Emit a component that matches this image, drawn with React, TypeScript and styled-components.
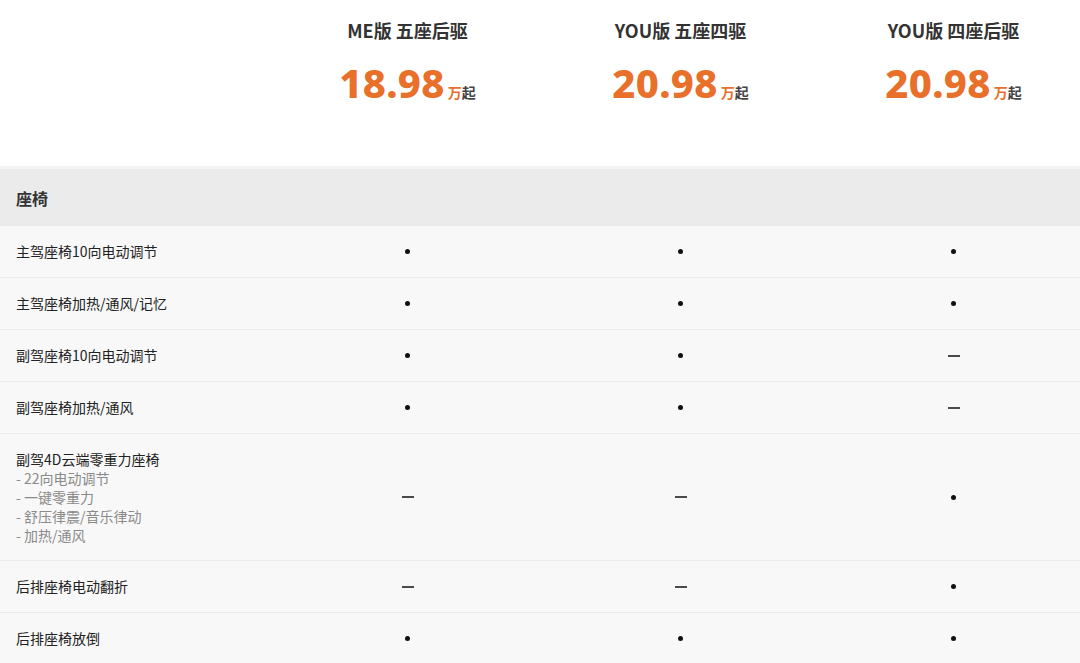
import styled, { createGlobalStyle } from 'styled-components';

const GlobalStyle = createGlobalStyle`
  html, body {
    margin: 0;
    padding: 0;
    background: #ffffff;
    font-family: "Noto Sans CJK SC", "Noto Sans", sans-serif;
    overflow: hidden;
  }
`;

const COLS = '271px 273px 273px 273px';

const Page = styled.div`
  width: 1080px;
  height: 663px;
  overflow: hidden;
  background: #f8f8f8;
`;

const Header = styled.div`
  display: grid;
  grid-template-columns: ${COLS};
  height: 166px;
  background: #ffffff;
`;

const ModelCell = styled.div`
  display: flex;
  flex-direction: column;
  align-items: center;
  padding-top: 17px;
`;

const ModelName = styled.div`
  font-size: 18px;
  font-weight: 700;
  color: #333333;
  line-height: 26px;
  white-space: nowrap;
`;

const Price = styled.div`
  margin-top: 16px;
  display: flex;
  align-items: baseline;
  white-space: nowrap;
`;

const PriceNum = styled.span`
  font-family: "Noto Sans", sans-serif;
  font-size: 40px;
  font-weight: 800;
  color: #e8702a;
  letter-spacing: 0.3px;
  line-height: 48px;
`;

const Unit = styled.span<{ $accent?: boolean }>`
  font-size: 14px;
  font-weight: 700;
  color: ${({ $accent }) => ($accent ? '#e8702a' : '#444444')};
  margin-left: ${({ $accent }) => ($accent ? '3px' : '0')};
`;

const Section = styled.div`
  height: 60px;
  display: flex;
  align-items: center;
  padding-left: 16px;
  background: #ebebeb;
  border-top: 3px solid #f3f3f3;
  box-sizing: border-box;
  font-size: 16px;
  font-weight: 700;
  color: #333333;
`;

const Row = styled.div<{ $tall?: boolean }>`
  display: grid;
  grid-template-columns: ${COLS};
  min-height: ${({ $tall }) => ($tall ? '127px' : '52px')};
  border-bottom: 1px solid #ececec;
  box-sizing: border-box;
  background: #f8f8f8;
`;

const Label = styled.div`
  display: flex;
  flex-direction: column;
  justify-content: center;
  padding-left: 16px;
  font-size: 14px;
  color: #222222;
  line-height: 19px;
`;

const Sub = styled.div`
  color: #8a8a8a;
  font-size: 14px;
  line-height: 19px;
`;

const Cell = styled.div`
  display: flex;
  align-items: center;
  justify-content: center;
`;

const Dot = styled.span`
  width: 5px;
  height: 5px;
  border-radius: 50%;
  background: #111111;
`;

const Dash = styled.span`
  width: 12px;
  height: 2px;
  background: #4a4a4a;
`;

const models = [
  { name: 'ME版 五座后驱', price: '18.98' },
  { name: 'YOU版 五座四驱', price: '20.98' },
  { name: 'YOU版 四座后驱', price: '20.98' },
];

type Item = { label: string; subs?: string[]; values: boolean[] };

const items: Item[] = [
  { label: '主驾座椅10向电动调节', values: [true, true, true] },
  { label: '主驾座椅加热/通风/记忆', values: [true, true, true] },
  { label: '副驾座椅10向电动调节', values: [true, true, false] },
  { label: '副驾座椅加热/通风', values: [true, true, false] },
  {
    label: '副驾4D云端零重力座椅',
    subs: ['- 22向电动调节', '- 一键零重力', '- 舒压律震/音乐律动', '- 加热/通风'],
    values: [false, false, true],
  },
  { label: '后排座椅电动翻折', values: [false, false, true] },
  { label: '后排座椅放倒', values: [true, true, true] },
];

export default function App() {
  return (
    <Page>
      <GlobalStyle />
      <Header>
        <div />
        {models.map((m) => (
          <ModelCell key={m.name}>
            <ModelName>{m.name}</ModelName>
            <Price>
              <PriceNum>{m.price}</PriceNum>
              <Unit $accent>万</Unit>
              <Unit>起</Unit>
            </Price>
          </ModelCell>
        ))}
      </Header>
      <Section>座椅</Section>
      {items.map((it) => (
        <Row key={it.label} $tall={!!it.subs}>
          <Label>
            <div>{it.label}</div>
            {it.subs?.map((s) => <Sub key={s}>{s}</Sub>)}
          </Label>
          {it.values.map((v, i) => (
            <Cell key={i}>{v ? <Dot /> : <Dash />}</Cell>
          ))}
        </Row>
      ))}
    </Page>
  );
}
